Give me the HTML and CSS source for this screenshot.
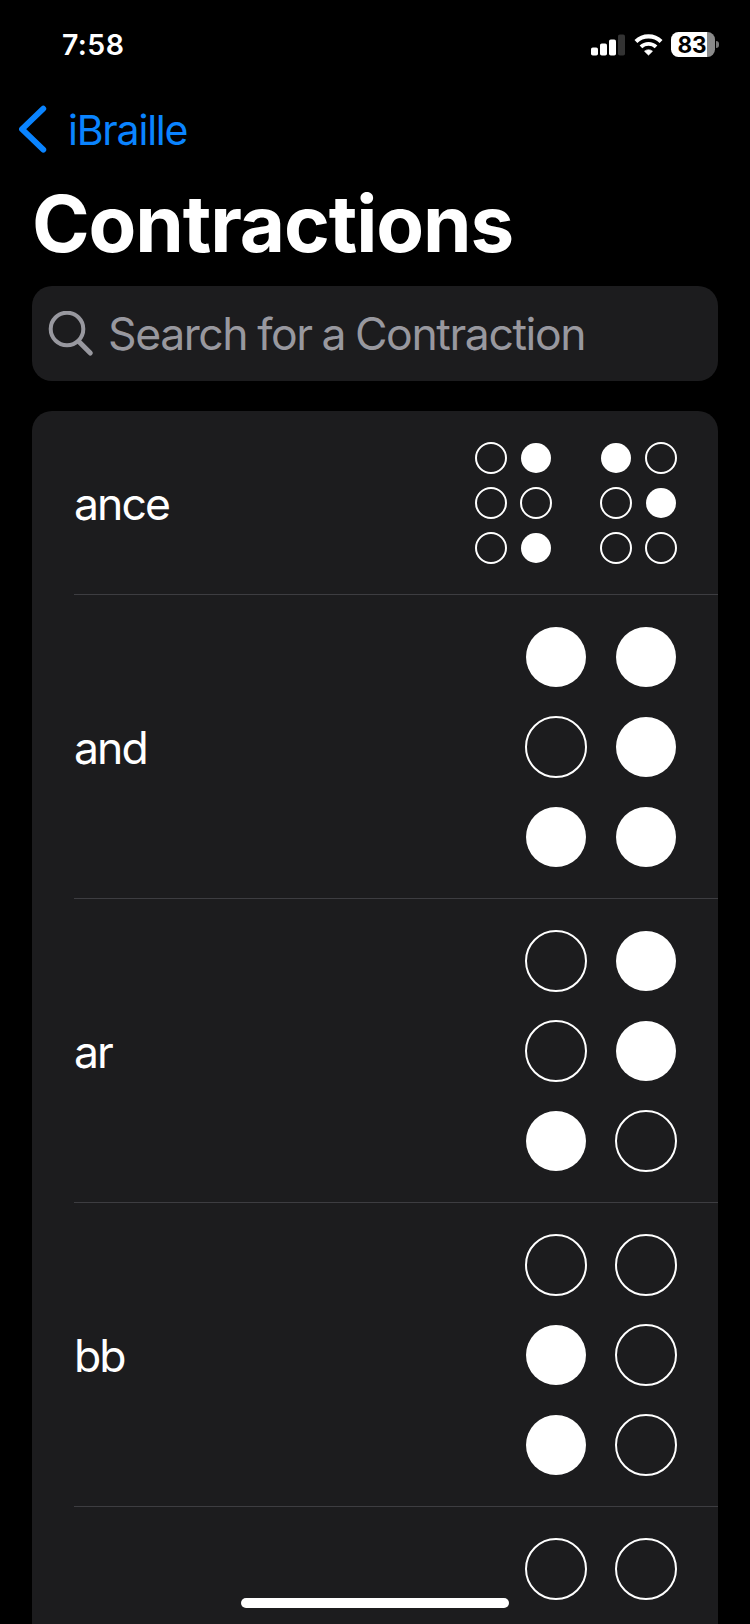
FILE: index.html
```html
<!DOCTYPE html>
<html lang="en">
<head>
<meta charset="utf-8">
<title>Contractions</title>
<link rel="stylesheet" href="styles.css">
</head>
<body>
<div class="screen">
  <header class="status">
    <span class="time">7:58</span>
    <div class="status-icons">
      <svg class="signal" width="34" height="22" viewBox="0 0 34 22">
        <rect x="0" y="13.5" width="7" height="8" rx="1.8" fill="#fff"/>
        <rect x="9" y="9.5" width="7" height="12" rx="1.8" fill="#fff"/>
        <rect x="18" y="5.5" width="7" height="16" rx="1.8" fill="#fff"/>
        <rect x="27" y="0.5" width="7" height="21" rx="1.8" fill="#333"/>
      </svg>
      <svg class="wifi" width="29" height="22" viewBox="0 0 30 22">
        <path d="M2 7.3A18.8 18.8 0 0 1 28 7.3" fill="none" stroke="#fff" stroke-width="4.3"/>
        <path d="M7.2 12.9A11.4 11.4 0 0 1 22.8 12.9" fill="none" stroke="#fff" stroke-width="4"/>
        <path d="M15 21.5L10.8 17.4A6.3 6.3 0 0 1 19.2 17.4Z" fill="#fff" stroke="#fff" stroke-width="0.6" stroke-linejoin="round"/>
      </svg>
      <div class="battery"><span class="level">83</span></div>
    </div>
  </header>
  <nav class="nav">
    <svg width="30" height="48" viewBox="0 0 30 48"><path d="M25.3 3.7L4 24.2L25.3 44.7" fill="none" stroke="#0a84ff" stroke-width="5.8" stroke-linecap="round" stroke-linejoin="round"/></svg>
    <span class="back">iBraille</span>
  </nav>
  <h1 class="title">Contractions</h1>
  <div class="search">
    <svg width="46" height="46" viewBox="0 0 46 46" fill="none" stroke="#98989f" stroke-linecap="round"><circle cx="19" cy="18" r="16.3" stroke-width="4"/><path d="M30.8 30.5L42.3 42" stroke-width="5"/></svg>
    <span class="placeholder">Search for a Contraction</span>
  </div>
  <main class="list">
    <div class="row">
      <span class="label">ance</span>
      <div class="cells small">
        <div class="cell"><i></i><i class="on"></i><i></i><i></i><i></i><i class="on"></i></div>
        <div class="cell"><i class="on"></i><i></i><i></i><i class="on"></i><i></i><i></i></div>
      </div>
    </div>
    <div class="row">
      <span class="label">and</span>
      <div class="cells"><div class="cell"><i class="on"></i><i class="on"></i><i></i><i class="on"></i><i class="on"></i><i class="on"></i></div></div>
    </div>
    <div class="row">
      <span class="label">ar</span>
      <div class="cells"><div class="cell"><i></i><i class="on"></i><i></i><i class="on"></i><i class="on"></i><i></i></div></div>
    </div>
    <div class="row">
      <span class="label">bb</span>
      <div class="cells"><div class="cell"><i></i><i></i><i class="on"></i><i></i><i class="on"></i><i></i></div></div>
    </div>
    <div class="row">
      <div class="cells"><div class="cell"><i></i><i></i></div></div>
    </div>
  </main>
  <div class="home"></div>
</div>
</body>
</html>
```
FILE: styles.css
```css
body {
  margin: 0;
  background: #000;
  color: #fff;
  font-family: Inter, "Liberation Sans", sans-serif;
}
.screen {
  position: relative;
  width: 750px;
  height: 1624px;
  overflow: hidden;
  display: flex;
  flex-direction: column;
}
.status,
.nav,
.title,
.search {
  flex-shrink: 0;
}
.status {
  display: flex;
  justify-content: space-between;
  align-items: center;
  height: 90px;
  padding: 0 35px 1px 62px;
  box-sizing: border-box;
}
.time {
  font-size: 28.5px;
  font-weight: 600;
  letter-spacing: 0.4px;
}
.status-icons {
  display: flex;
  align-items: center;
}
.wifi { margin: 0 8px 0 9px; }
.battery {
  position: relative;
  width: 44px;
  height: 25px;
  border-radius: 7.5px;
  background: linear-gradient(90deg, #fff 36px, #8a8a8a 36px);
  display: flex;
  align-items: center;
  justify-content: center;
}
.battery::after {
  content: "";
  position: absolute;
  left: 45px;
  top: 9px;
  width: 3px;
  height: 7px;
  border-radius: 0 3px 3px 0;
  background: #777;
}
.level {
  padding-right: 2px;
  color: #000;
  font-size: 22.5px;
  font-weight: 700;
  line-height: 25px;
}
.nav {
  display: flex;
  align-items: center;
  height: 78px;
  padding-left: 18px;
  gap: 20px;
  color: #0a84ff;
}
.back {
  padding-top: 1px;
  font-size: 41px;
  letter-spacing: -1.2px;
}
.title {
  margin: 0;
  padding-left: 32px;
  height: 118px;
  line-height: 112px;
  font-size: 78px;
  font-weight: 700;
  letter-spacing: -1.1px;
}
.search {
  display: flex;
  align-items: center;
  gap: 14px;
  height: 95px;
  margin: 0 32px 30px;
  padding-left: 16px;
  box-sizing: border-box;
  border-radius: 20px;
  background: #1c1c1e;
  color: #98989f;
}
.placeholder {
  padding-top: 1px;
  font-size: 44.5px;
  letter-spacing: -1.4px;
  word-spacing: -1.2px;
  white-space: nowrap;
}
.list {
  flex: 1;
  margin: 0 32px;
  border-radius: 20px 20px 0 0;
  background: #1c1c1e;
}
.row {
  display: flex;
  align-items: center;
  justify-content: space-between;
  margin-left: 42px;
  padding: 32px 42px 31px 0;
  border-bottom: 1px solid #3d3d41;
}
.row:last-child { border-bottom: 0; justify-content: flex-end; }
.label {
  padding-top: 2px;
  font-size: 44.5px;
  line-height: 54px;
  letter-spacing: -1.9px;
}
.cells {
  display: flex;
  gap: 50px;
}
.cell {
  display: grid;
  grid-template-columns: 60px 60px;
  grid-auto-rows: 60px;
  gap: 30px;
}
.small .cell {
  grid-template-columns: 30px 30px;
  grid-auto-rows: 30px;
  gap: 15px;
}
.cell i {
  margin: -1px;
  border: 2px solid #fff;
  border-radius: 50%;
}
.cell .on {
  margin: 0;
  border: 0;
  background: #fff;
}
.home {
  position: absolute;
  left: 241px;
  top: 1598px;
  width: 268px;
  height: 10px;
  border-radius: 5px;
  background: #fff;
}
```
